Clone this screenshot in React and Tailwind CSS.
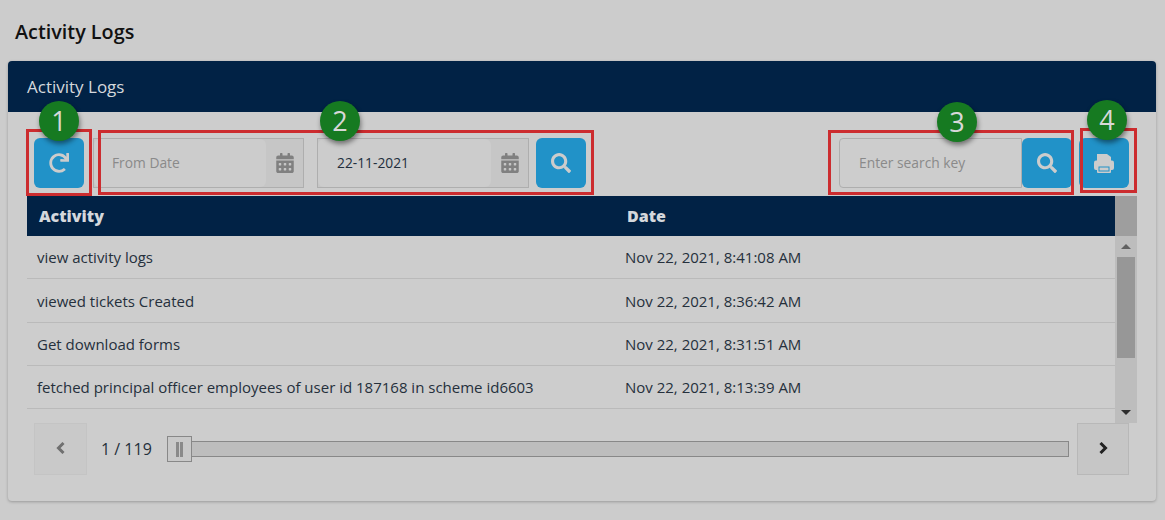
import React from 'react';
import { FaRedo, FaCalendarAlt, FaSearch } from 'react-icons/fa';

const ROWS = [
  { activity: 'view activity logs', date: 'Nov 22, 2021, 8:41:08 AM', h: 'h-[43px]' },
  { activity: 'viewed tickets Created', date: 'Nov 22, 2021, 8:36:42 AM', h: 'h-[44px] pt-px' },
  { activity: 'Get download forms', date: 'Nov 22, 2021, 8:31:51 AM', h: 'h-[43px]' },
  { activity: 'fetched principal officer employees of user id 187168 in scheme id6603', date: 'Nov 22, 2021, 8:13:39 AM', h: 'h-[43px]' },
];

const BlueButton = ({ children, className = '' }) => (
  <button className={`w-[50px] h-[50px] shrink-0 flex items-center justify-center rounded-[6px] bg-[#2192c8] text-[#cccccc] ${className}`}>
    {children}
  </button>
);

const DateInput = ({ value, placeholder, className = '' }) => (
  <div className={`h-[50px] flex border border-[#aeaeae] bg-[#c6c6c6] ${className}`}>
    <div className={`flex-1 flex items-center rounded-[6px] bg-[#cccccc] text-[13.8px] ${value ? 'pl-[19px] text-[#222f3d]' : 'pl-[18px] text-[#8a8a8a]'}`}>
      {value || placeholder}
    </div>
    <div className="w-[37px] flex items-center justify-center text-[#808080]">
      <FaCalendarAlt className="w-[18px] h-[20px]" />
    </div>
  </div>
);

const PrintIcon = () => (
  <svg width="20" height="19" viewBox="0 0 20 19" fill="currentColor">
    <path d="M3 0h10l4 3v6H3z" />
    <rect x="0" y="6.5" width="20" height="9.5" rx="2" />
    <rect x="3" y="11" width="14" height="8" rx="1" />
    <rect x="5" y="13" width="10" height="4" stroke="#2192c8" strokeWidth="1" />
  </svg>
);

const Chevron = ({ points }) => (
  <svg width="9" height="12" viewBox="0 0 9 12" fill="none" stroke="currentColor" strokeWidth="3" className="mb-[3px]">
    <polyline points={points} />
  </svg>
);

const Badge = ({ n, className }) => (
  <div className={`absolute w-10 h-10 rounded-full bg-[#167a21] text-[#d8d8d8] text-[27px] leading-10 text-center shadow-[1px_3px_5px_rgba(0,0,0,0.45)] ${className}`}>
    {n}
  </div>
);

const RedBox = ({ className }) => (
  <div className={`absolute border-[3px] border-[#cc2c2f] pointer-events-none ${className}`} />
);

export default function App() {
  return (
    <div className="w-[1165px] h-[520px] overflow-hidden bg-[#cccccc] font-['Open_Sans',sans-serif] text-[#25303c]">
      <h1 className="h-[61px] pl-[15px] pt-[18px] text-[19.8px] leading-[28px] font-semibold text-[#111111]">Activity Logs</h1>

      <div className="relative ml-2 w-[1148px] h-[440px] rounded-[4px] bg-[#cdcdcd] shadow-[0_1px_3px_rgba(0,0,0,0.25)]">
        <div className="h-[51px] pl-[19px] flex items-center rounded-t-[4px] bg-[#012245] text-[17px] text-[#d4d8dc]">Activity Logs</div>

        {/* Toolbar */}
        <div className="flex items-center h-[50px] mt-[26px] pl-[26px] pr-[27px]">
          <BlueButton><FaRedo className="w-[20px] h-[20px]" /></BlueButton>
          <DateInput placeholder="From Date" className="w-[211px] ml-[9px]" />
          <DateInput value="22-11-2021" className="w-[212px] ml-[13px]" />
          <BlueButton className="ml-[7px]"><FaSearch className="w-[20px] h-[20px]" /></BlueButton>
          <div className="w-[183px] h-[50px] ml-auto flex items-center pl-[19px] rounded-l-[4px] border border-[#aeaeae] text-[13.8px] text-[#8a8a8a]">Enter search key</div>
          <BlueButton><FaSearch className="w-[20px] h-[20px]" /></BlueButton>
          <BlueButton className="ml-[7px]"><PrintIcon /></BlueButton>
        </div>

        {/* Table with its scrollbar */}
        <div className="flex mt-2 ml-[19px] w-[1110px]">
          <div className="w-[1088px]">
            <div className="h-10 flex items-center bg-[#012245] text-[16px] font-extrabold text-[#d4d8dc]">
              <div className="w-[600px] pl-3">Activity</div>
              <div>Date</div>
            </div>
            {ROWS.map((row) => (
              <div key={row.date} className={`${row.h} flex items-center border-b border-[#bababa] text-[15px]`}>
                <div className="w-[598px] pl-[10px] whitespace-nowrap">{row.activity}</div>
                <div className="whitespace-nowrap">{row.date}</div>
              </div>
            ))}
          </div>
          <div className="w-[22px] h-[227px] flex flex-col bg-[#bdbdbd]">
            <div className="h-10 bg-[#9e9e9e]" />
            <div className="h-[21px] flex items-center justify-center">
              <div className="w-0 h-0 border-x-[5px] border-x-transparent border-b-[5px] border-b-[#606060]" />
            </div>
            <div className="h-[101px] mx-[2px] bg-[#979797]" />
            <div className="mt-auto h-[21px] flex items-center justify-center">
              <div className="w-0 h-0 border-x-[5px] border-x-transparent border-t-[5px] border-t-[#2e2e2e]" />
            </div>
          </div>
        </div>

        {/* Pager */}
        <div className="flex items-center h-[52px] pl-[26px] pr-[27px]">
          <button className="w-[53px] h-[52px] flex items-center justify-center border border-[#c4c4c4] bg-[#c9c9c9] text-[#707070]">
            <Chevron points="7.5,1 2.5,6 7.5,11" />
          </button>
          <span className="ml-[14px] w-[65px] text-[16px]">1 / 119</span>
          <div className="relative flex-1 h-[16px] ml-[25px] mr-2 border border-[#888888] bg-[#bdbdbd]">
            <div className="absolute -left-[25px] -top-[6px] w-[25px] h-[26px] flex items-center justify-center gap-[1px] border border-[#888888] bg-[#c9c9c9]">
              <span className="w-[3px] h-[15px] bg-[#8a8a8a]" />
              <span className="w-[3px] h-[15px] bg-[#8a8a8a]" />
            </div>
          </div>
          <button className="w-[52px] h-[52px] flex items-center justify-center border border-[#b8b8b8] bg-[#c6c6c6] text-[#222222]">
            <Chevron points="1.5,1 6.5,6 1.5,11" />
          </button>
        </div>

        {/* Annotations */}
        <RedBox className="left-[18px] top-[68px] w-[66px] h-[67px]" />
        <RedBox className="left-[90px] top-[69px] w-[496px] h-[65px]" />
        <RedBox className="left-[820px] top-[69px] w-[246px] h-[65px]" />
        <RedBox className="left-[1072px] top-[67px] w-[57px] h-[65px]" />
        <Badge n="1" className="left-[31px] top-[40px]" />
        <Badge n="2" className="left-[312px] top-[40px]" />
        <Badge n="3" className="left-[929px] top-[41px]" />
        <Badge n="4" className="left-[1079px] top-[39px]" />
      </div>
    </div>
  );
}
